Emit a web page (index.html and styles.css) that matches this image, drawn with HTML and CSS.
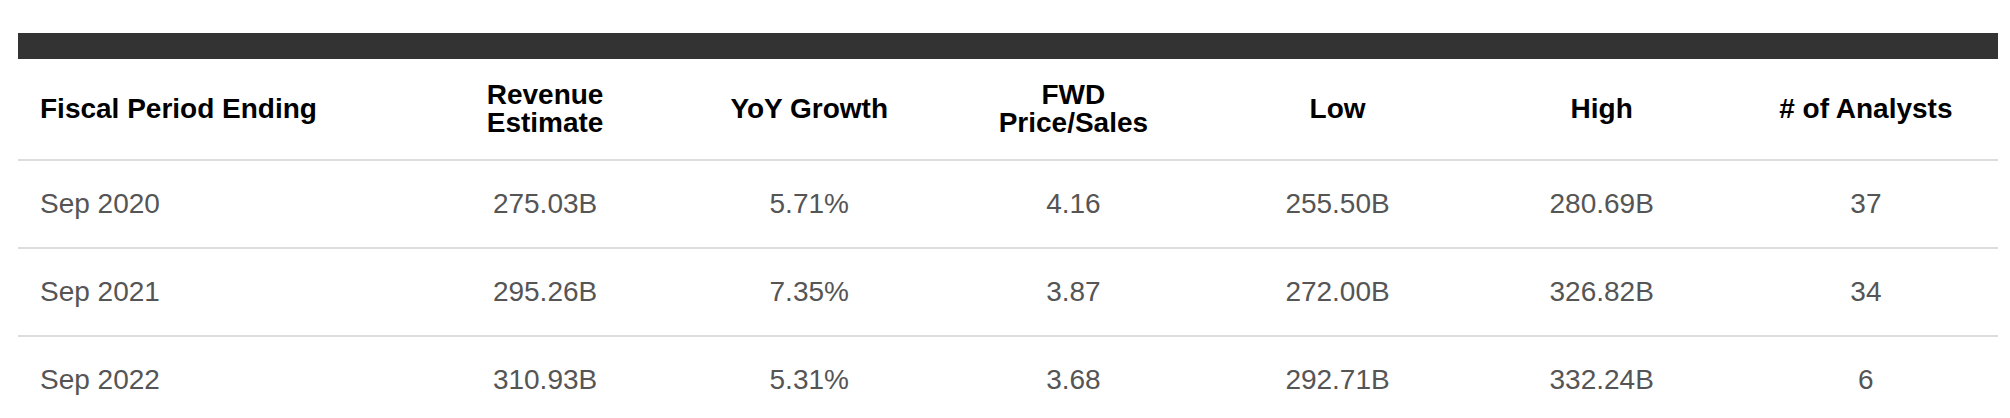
FILE: index.html
```html
<!DOCTYPE html>
<html lang="en">
<head>
<meta charset="utf-8">
<title>Revenue Estimates</title>
<link rel="stylesheet" href="styles.css">
</head>
<body>
<div class="wrap">
  <div class="bar"></div>
  <table class="est">
    <colgroup>
      <col class="c-first">
      <col><col><col><col><col><col>
    </colgroup>
    <thead>
      <tr>
        <th class="left">Fiscal Period Ending</th>
        <th>Revenue<br>Estimate</th>
        <th>YoY Growth</th>
        <th>FWD<br>Price/Sales</th>
        <th>Low</th>
        <th>High</th>
        <th># of Analysts</th>
      </tr>
    </thead>
    <tbody>
      <tr>
        <td class="left">Sep 2020</td>
        <td>275.03B</td>
        <td>5.71%</td>
        <td>4.16</td>
        <td>255.50B</td>
        <td>280.69B</td>
        <td>37</td>
      </tr>
      <tr>
        <td class="left">Sep 2021</td>
        <td>295.26B</td>
        <td>7.35%</td>
        <td>3.87</td>
        <td>272.00B</td>
        <td>326.82B</td>
        <td>34</td>
      </tr>
      <tr>
        <td class="left">Sep 2022</td>
        <td>310.93B</td>
        <td>5.31%</td>
        <td>3.68</td>
        <td>292.71B</td>
        <td>332.24B</td>
        <td>6</td>
      </tr>
    </tbody>
  </table>
</div>
</body>
</html>
```
FILE: styles.css
```css
html, body {
  margin: 0;
  padding: 0;
  background: #fff;
}
body {
  font-family: "Liberation Sans", Arial, sans-serif;
}
.wrap {
  padding: 33px 12px 0 18px;
  width: 1980px;
}
.bar {
  height: 26px;
  background: #333333;
}
.est {
  width: 1980px;
  border-collapse: collapse;
  table-layout: fixed;
}
.c-first {
  width: 395px;
}
.est th,
.est td {
  text-align: center;
  vertical-align: middle;
  padding: 0;
  border-bottom: 2px solid #dddddd;
}
.est th {
  height: 100px;
  font-size: 28px;
  line-height: 28px;
  font-weight: bold;
  color: #000;
}
.est td {
  height: 86px;
  font-size: 28px;
  line-height: 32px;
  color: #555555;
}
.est .left {
  text-align: left;
  padding-left: 22px;
}
```
